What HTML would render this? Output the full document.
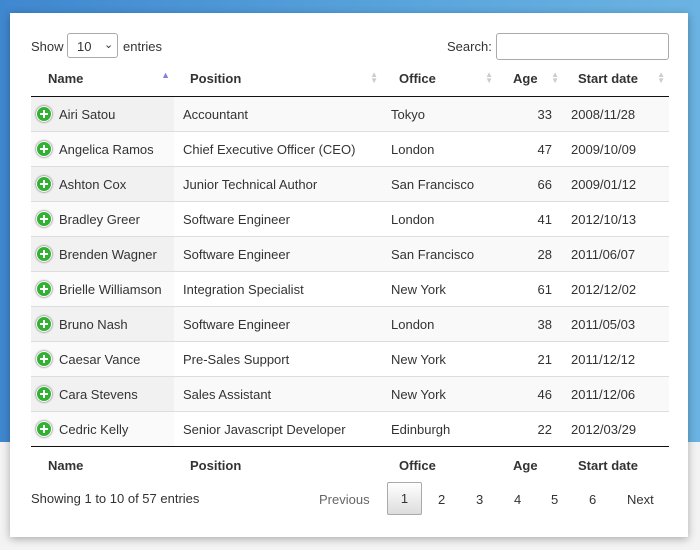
<!DOCTYPE html>
<html><head><style>
body{margin:0;width:700px;height:550px;overflow:hidden;font-family:"Liberation Sans",Arial,sans-serif;font-size:13px;color:#333;background:#f3f3f3;position:relative}
.bg{position:absolute;left:0;top:0;width:700px;height:442px;background:linear-gradient(90deg,#3f87cf,#5aa5dc 60%,#6bb3e2)}
.card{position:absolute;left:10px;top:13px;width:678px;height:524px;background:#fff;box-shadow:0 2px 8px rgba(0,0,0,.3)}
.t{position:absolute}
table{position:absolute;left:21px;top:48px;width:638px;border-collapse:collapse}
th{font-weight:bold;text-align:left;height:35px;padding:0;position:relative}
thead th{border-bottom:1px solid #111}
td{height:34px;padding:0;border-top:1px solid #ddd}
tbody tr:first-child td{border-top:none}
tbody tr:nth-child(odd) td{background:#f9f9f9}
tbody tr:nth-child(odd) td.s{background:#f1f1f1}
tbody tr:nth-child(even) td.s{background:#fafafa}
tbody tr:last-child td{border-bottom:1px solid #111}
td.s{padding-left:0}
.pl{width:14px;height:14px;border-radius:50%;background:#31b131;border:1.5px solid #fff;box-shadow:0 0 2px #444;display:inline-block;vertical-align:-3px;margin:0 7px 0 5px;position:relative}
.pl:before{content:"";position:absolute;left:3px;top:6px;width:8px;height:2px;background:#fff}
.pl:after{content:"";position:absolute;left:6px;top:3px;width:2px;height:8px;background:#fff}
.ar{position:absolute;top:11px;font-size:8px;color:#ccc;line-height:6px}
</style></head><body>
<div class="bg"></div>
<div class="card">
<div class="t" style="left:21px;top:26px">Show</div>
<div class="t" style="left:57px;top:20px;width:51px;height:25px;border:1px solid #aaa;border-radius:3px;box-sizing:border-box;padding:5px 0 0 9px">10<span style="position:absolute;left:36px;top:4px;font-size:11px">&#8964;</span></div>
<div class="t" style="left:113px;top:26px">entries</div>
<div class="t" style="left:437px;top:26px">Search:</div>
<div class="t" style="left:486px;top:20px;width:173px;height:27px;border:1px solid #aaa;border-radius:3px;box-sizing:border-box"></div>
<table>
<colgroup><col style="width:143px"><col style="width:208px"><col style="width:123px"><col style="width:57px"><col></colgroup>
<thead><tr><th style="padding-left:17px">Name<span class="ar" style="right:4px;color:#8080e0;font-size:9px">▲</span></th><th style="padding-left:16px">Position<span class="ar" style="right:4px">▲<br>▼</span></th><th style="padding-left:17px">Office<span class="ar" style="right:12px">▲<br>▼</span></th><th style="padding-left:8px">Age<span class="ar" style="right:3px">▲<br>▼</span></th><th style="padding-left:16px">Start date<span class="ar" style="right:4px">▲<br>▼</span></th></tr></thead>
<tbody>
<tr><td class="s"><span class="pl"></span>Airi Satou</td><td style="padding-left:9px">Accountant</td><td style="padding-left:9px">Tokyo</td><td style="text-align:right;padding-right:10px">33</td><td style="padding-left:9px">2008/11/28</td></tr>
<tr><td class="s"><span class="pl"></span>Angelica Ramos</td><td style="padding-left:9px">Chief Executive Officer (CEO)</td><td style="padding-left:9px">London</td><td style="text-align:right;padding-right:10px">47</td><td style="padding-left:9px">2009/10/09</td></tr>
<tr><td class="s"><span class="pl"></span>Ashton Cox</td><td style="padding-left:9px">Junior Technical Author</td><td style="padding-left:9px">San Francisco</td><td style="text-align:right;padding-right:10px">66</td><td style="padding-left:9px">2009/01/12</td></tr>
<tr><td class="s"><span class="pl"></span>Bradley Greer</td><td style="padding-left:9px">Software Engineer</td><td style="padding-left:9px">London</td><td style="text-align:right;padding-right:10px">41</td><td style="padding-left:9px">2012/10/13</td></tr>
<tr><td class="s"><span class="pl"></span>Brenden Wagner</td><td style="padding-left:9px">Software Engineer</td><td style="padding-left:9px">San Francisco</td><td style="text-align:right;padding-right:10px">28</td><td style="padding-left:9px">2011/06/07</td></tr>
<tr><td class="s"><span class="pl"></span>Brielle Williamson</td><td style="padding-left:9px">Integration Specialist</td><td style="padding-left:9px">New York</td><td style="text-align:right;padding-right:10px">61</td><td style="padding-left:9px">2012/12/02</td></tr>
<tr><td class="s"><span class="pl"></span>Bruno Nash</td><td style="padding-left:9px">Software Engineer</td><td style="padding-left:9px">London</td><td style="text-align:right;padding-right:10px">38</td><td style="padding-left:9px">2011/05/03</td></tr>
<tr><td class="s"><span class="pl"></span>Caesar Vance</td><td style="padding-left:9px">Pre-Sales Support</td><td style="padding-left:9px">New York</td><td style="text-align:right;padding-right:10px">21</td><td style="padding-left:9px">2011/12/12</td></tr>
<tr><td class="s"><span class="pl"></span>Cara Stevens</td><td style="padding-left:9px">Sales Assistant</td><td style="padding-left:9px">New York</td><td style="text-align:right;padding-right:10px">46</td><td style="padding-left:9px">2011/12/06</td></tr>
<tr><td class="s"><span class="pl"></span>Cedric Kelly</td><td style="padding-left:9px">Senior Javascript Developer</td><td style="padding-left:9px">Edinburgh</td><td style="text-align:right;padding-right:10px">22</td><td style="padding-left:9px">2012/03/29</td></tr>
</tbody>
<tfoot><tr><th style="padding-left:17px;height:36px">Name</th><th style="padding-left:16px">Position</th><th style="padding-left:17px">Office</th><th style="padding-left:8px">Age</th><th style="padding-left:16px">Start date</th></tr></tfoot>
</table>
<div class="t" style="left:21px;top:478px">Showing 1 to 10 of 57 entries</div>
<div class="t" style="left:309px;top:479px;color:#666">Previous</div>
<div class="t" style="left:377px;top:469px;width:35px;height:33px;border:1px solid #aaa;border-radius:2px;background:linear-gradient(#fff,#ddd);box-sizing:border-box;text-align:center;line-height:31px">1</div>
<div class="t" style="left:428px;top:479px">2</div>
<div class="t" style="left:466px;top:479px">3</div>
<div class="t" style="left:504px;top:479px">4</div>
<div class="t" style="left:541px;top:479px">5</div>
<div class="t" style="left:579px;top:479px">6</div>
<div class="t" style="left:617px;top:479px">Next</div>
</div>
</body></html>
